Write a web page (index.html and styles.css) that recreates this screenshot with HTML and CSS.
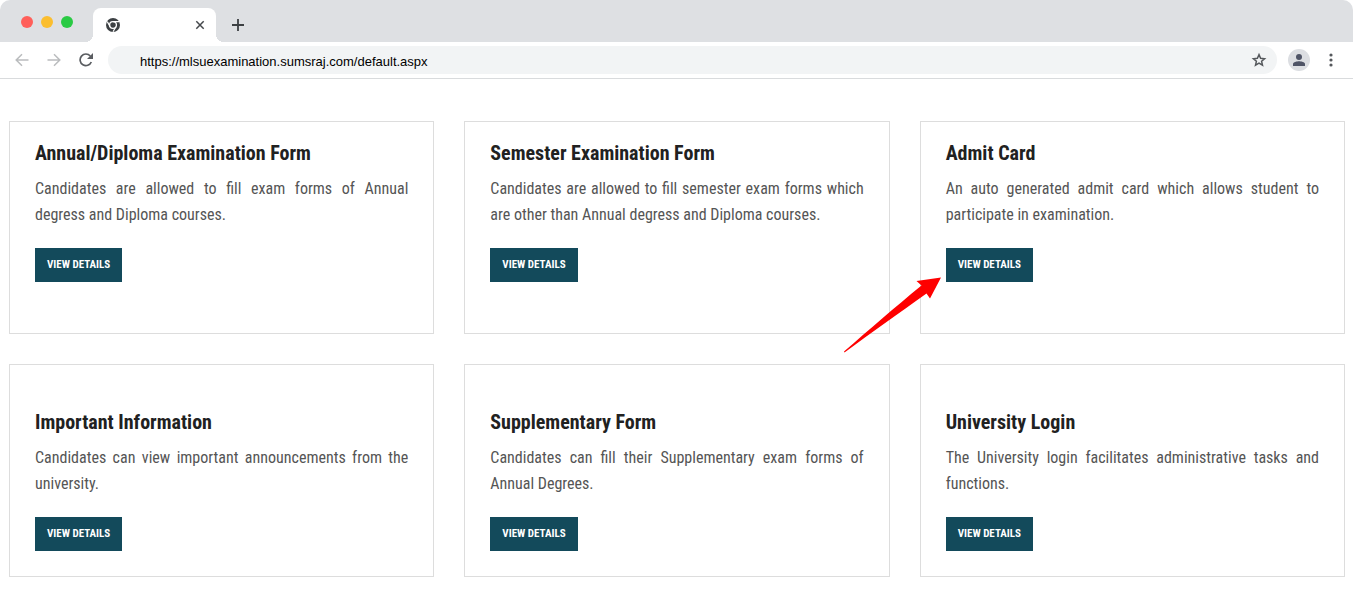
FILE: index.html
```html
<!DOCTYPE html>
<html lang="en">

<head>
    <meta charset="UTF-8">
    <meta name="viewport" content="width=device-width, initial-scale=1">
    <title>MLSU Examination</title>
    <link rel="stylesheet" href="styles.css">
</head>

<body>
    <header class="browser">
        <div class="tab-bar">
            <div class="lights">
                <span class="light red"></span>
                <span class="light yellow"></span>
                <span class="light green"></span>
            </div>
            <div class="tab">
                <svg class="tab-logo" width="14" height="14" viewBox="0 0 14 14">
                    <circle cx="7" cy="7" r="7" fill="#3c4043"/>
                    <circle cx="7" cy="7" r="3.4" fill="none" stroke="#fff" stroke-width="1.3"/>
                    <path d="M7 3.600H13M4.100 8.700L1.300 3.600M9.900 8.700L7 13.700" stroke="#fff" stroke-width="1.200"/>
                </svg>
                <button class="icon-btn" aria-label="Close tab">
                    <svg width="10" height="10" viewBox="0 0 10 10"><path d="M1.300 1.300L8.700 8.700M8.700 1.300L1.300 8.700" stroke="#45484c" stroke-width="1.500"/></svg>
                </button>
            </div>
            <button class="icon-btn new-tab" aria-label="New tab">
                <svg width="12" height="12" viewBox="0 0 12 12"><path d="M6 0V12M0 6H12" stroke="#3c4043" stroke-width="1.800"/></svg>
            </button>
        </div>
        <div class="toolbar">
            <div class="nav">
                <button class="icon-btn" aria-label="Back">
                    <svg width="14" height="14" viewBox="0 0 14 14"><path d="M13.500 7H1.500M7 1.200L1.200 7L7 12.800" fill="none" stroke="#babcbe" stroke-width="1.500"/></svg>
                </button>
                <button class="icon-btn" aria-label="Forward">
                    <svg width="14" height="14" viewBox="0 0 14 14"><path d="M0.500 7H12.500M7 1.200L12.800 7L7 12.800" fill="none" stroke="#babcbe" stroke-width="1.500"/></svg>
                </button>
                <button class="icon-btn" aria-label="Reload">
                    <svg width="14" height="14" viewBox="0 0 14 14"><path d="M12.300 9A5.800 5.800 0 1 1 11.300 3" fill="none" stroke="#5a5d61" stroke-width="1.700"/><path d="M14 0V6H8Z" fill="#5a5d61"/></svg>
                </button>
            </div>
            <div class="address">
                <input type="text" class="url" aria-label="Address" value="https://mlsuexamination.sumsraj.com/default.aspx">
                <button class="icon-btn" aria-label="Bookmark">
                    <svg width="16" height="16" viewBox="0 0 16 16"><path d="M8 2.600L9.600 6.300L13.600 6.700L10.600 9.300L11.500 13.200L8 11.200L4.500 13.200L5.400 9.300L2.400 6.700L6.400 6.300Z" fill="none" stroke="#55585c" stroke-width="1.500"/></svg>
                </button>
            </div>
            <button class="icon-btn profile" aria-label="Profile">
                <svg width="12" height="12" viewBox="0 0 12 12"><circle cx="6" cy="3" r="3" fill="#4f5466"/><path d="M0 12V10C0 8 4 7.200 6 7.200S12 8 12 10V12Z" fill="#4f5466"/></svg>
            </button>
            <button class="icon-btn" aria-label="Menu">
                <svg width="4" height="14" viewBox="0 0 4 14" fill="#55585c"><circle cx="2" cy="2" r="1.600"/><circle cx="2" cy="7" r="1.600"/><circle cx="2" cy="12" r="1.600"/></svg>
            </button>
        </div>
    </header>

    <main class="cards">
        <section class="card">
            <h2>Annual/Diploma Examination Form</h2>
            <p>Candidates are allowed to fill exam forms of Annual degress and Diploma courses.</p>
            <a href="#" class="btn">View Details</a>
        </section>
        <section class="card">
            <h2>Semester Examination Form</h2>
            <p>Candidates are allowed to fill semester exam forms which are other than Annual degress and Diploma courses.</p>
            <a href="#" class="btn">View Details</a>
        </section>
        <section class="card">
            <h2>Admit Card</h2>
            <p>An auto generated admit card which allows student to participate in examination.</p>
            <div class="btn-wrap">
                <a href="#" class="btn">View Details</a>
                <svg class="arrow" width="98" height="76" viewBox="0 0 98 76"><path d="M0 74.500C26 52 50 31 77.500 8.500L72.500 4L97 0.500L86 21.500L82.500 16.500C54 37 28 55 0.500 75.500Z" fill="#fe0000"/></svg>
            </div>
        </section>
        <section class="card spaced">
            <h2>Important Information</h2>
            <p>Candidates can view important announcements from the university.</p>
            <a href="#" class="btn">View Details</a>
        </section>
        <section class="card spaced">
            <h2>Supplementary Form</h2>
            <p>Candidates can fill their Supplementary exam forms of Annual Degrees.</p>
            <a href="#" class="btn">View Details</a>
        </section>
        <section class="card spaced">
            <h2>University Login</h2>
            <p>The University login facilitates administrative tasks and functions.</p>
            <a href="#" class="btn">View Details</a>
        </section>
    </main>
</body>

</html>
```
FILE: styles.css
```css
* {
    box-sizing: border-box;
}

body {
    margin: 0;
    font-family: "Roboto Condensed", "Liberation Sans Narrow", Roboto, sans-serif;
    color: #555;
    background-color: #fff;
}

/* Browser bar */
.browser {
    border-bottom: 1px solid #d9dbdd;
}

.tab-bar {
    display: flex;
    align-items: flex-end;
    height: 42px;
    padding-left: 21px;
    background-color: #dee0e3;
    border-radius: 10px 10px 0 0;
}

.lights {
    display: flex;
    gap: 8px;
    margin-right: 20px;
    padding-bottom: 14px;
}

.light {
    width: 12px;
    height: 12px;
    border-radius: 50%;
}

.red {
    background-color: #ff5f5a;
}

.yellow {
    background-color: #fbbe2f;
}

.green {
    background-color: #2aca44;
}

.tab {
    position: relative;
    display: flex;
    align-items: center;
    justify-content: space-between;
    width: 123px;
    height: 34px;
    padding: 0 11px 0 13px;
    background-color: #fff;
    border-radius: 8px 8px 0 0;
}

/* Curved feet of the active tab */
.tab::before,
.tab::after {
    content: "";
    position: absolute;
    bottom: 0;
    width: 8px;
    height: 8px;
}

.tab::before {
    left: -8px;
    background: radial-gradient(circle at 0 0, #dee0e3 8px, #fff 8px);
}

.tab::after {
    right: -8px;
    background: radial-gradient(circle at 100% 0, #dee0e3 8px, #fff 8px);
}

.icon-btn {
    display: flex;
    flex: none;
    align-items: center;
    justify-content: center;
    padding: 0;
    border: none;
    background: none;
    cursor: pointer;
}

.new-tab {
    height: 34px;
    margin-left: 16px;
}

.toolbar {
    display: flex;
    align-items: center;
    height: 36px;
    padding: 0 20px 0 15px;
}

.nav {
    display: flex;
    gap: 18px;
    margin-right: 15px;
}

.address {
    display: flex;
    flex: 1;
    align-items: center;
    height: 28px;
    padding: 0 10px 0 32px;
    background-color: #f2f4f5;
    border-radius: 14px;
}

.url {
    flex: 1;
    min-width: 0;
    padding: 2px 0 0;
    border: none;
    outline: none;
    background: none;
    color: #000;
    font-family: "Liberation Sans", Arial, sans-serif;
    font-size: 13px;
}

.profile {
    width: 22px;
    height: 22px;
    margin: 0 19px 0 11px;
    border-radius: 50%;
    background-color: #dcdee2;
}

/* Cards */
.cards {
    display: grid;
    grid-template-columns: repeat(3, 1fr);
    grid-auto-rows: 1fr;
    gap: 30px;
    padding: 42px 8px 24px 9px;
}

.card {
    padding: 16px 25px 25px;
    border: 1px solid #ddd;
}

.spaced {
    padding-top: 42px;
}

.card h2 {
    margin: 0 0 8px;
    color: #212121;
    font-size: 20px;
    font-weight: 700;
    line-height: 30px;
}

.card p {
    margin: 0 0 20px;
    font-size: 16px;
    line-height: 26px;
    text-align: justify;
}

.btn {
    display: block;
    width: fit-content;
    padding: 0 12px;
    background-color: #134a5b;
    color: #fff;
    font-size: 11px;
    font-weight: 700;
    line-height: 34px;
    text-decoration: none;
    text-transform: uppercase;
}

.btn-wrap {
    position: relative;
}

/* Pointer to the admit card button */
.arrow {
    position: absolute;
    top: 29px;
    right: calc(100% + 4px);
}
```
